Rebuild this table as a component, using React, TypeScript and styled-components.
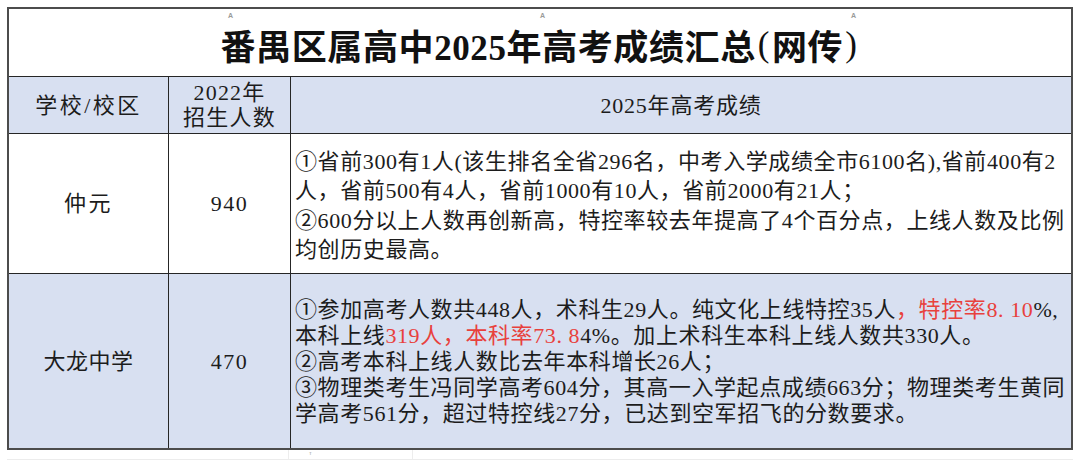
import React from 'react';
import styled, { createGlobalStyle } from 'styled-components';

const FONT = `"Liberation Serif", "Noto Sans CJK SC", serif`;
const LINE = '#262626';
const BLUE = '#d8e0f1';
const RED = '#e8413d';

const GlobalStyle = createGlobalStyle`
    html, body {
        margin: 0;
        padding: 0;
        background: #ffffff;
    }
    body {
        font-family: ${FONT};
        color: #1c1c1c;
    }
`;

const Page = styled.div`
    width: 1080px;
    height: 465px;
    padding: 7px 0 0 7px;
    box-sizing: border-box;
    overflow: hidden;
`;

const Sheet = styled.div`
    width: 1066px;
    display: grid;
    grid-template-columns: 160px 122px 1fr;
    grid-template-rows: 68px 57px 140px 174px;
    border: 2px solid #4c4c4c;
    box-sizing: border-box;
`;

const Cell = styled.div<{ $bg?: string; $last?: boolean; $bottom?: boolean; $spacing?: number }>`
    background: ${p => p.$bg || '#ffffff'};
    border-right: ${p => (p.$last ? 'none' : `1.5px solid ${LINE}`)};
    border-bottom: ${p => (p.$bottom ? 'none' : `1.5px solid ${LINE}`)};
    display: flex;
    align-items: center;
    justify-content: center;
    text-align: center;
    font-size: 22px;
    line-height: 25px;
    letter-spacing: ${p => p.$spacing ?? 1.5}px;
    box-sizing: border-box;
`;

const TitleCell = styled.div`
    grid-column: 1 / 4;
    position: relative;
    border-bottom: 1.5px solid ${LINE};
    display: flex;
    align-items: center;
    justify-content: center;
    padding-top: 4px;
    font-size: 35px;
    font-weight: 700;
    letter-spacing: 0.6px;
    color: #111;
    box-sizing: border-box;
`;

const Marker = styled.span<{ $x: number }>`
    position: absolute;
    top: 3px;
    left: ${p => p.$x}px;
    font-family: "Liberation Sans", sans-serif;
    font-size: 7px;
    color: #9a9a9a;
`;

const Paren = styled.span`
    font-weight: 400;
    margin: 0 2px;
`;

const TextCell = styled(Cell)<{ $lh: number; $top: number }>`
    justify-content: center;
    flex-direction: column;
    align-items: flex-start;
    text-align: left;
    padding: ${p => p.$top}px 0 0 4px;
    line-height: ${p => p.$lh}px;
    letter-spacing: 0.6px;
`;

const Line = styled.div`
    white-space: nowrap;
`;

const Red = styled.span`
    color: ${RED};
`;

const Below = styled.div`
    width: 1066px;
    height: 9px;
    display: grid;
    grid-template-columns: 282px 124px 1fr;
    border-bottom: 1px solid #ececec;
    position: relative;
`;

const BelowCell = styled.div`
    border-right: 1px solid #ededed;
`;

const Tick = styled.span`
    position: absolute;
    left: 302px;
    top: 0;
    font-family: "Liberation Sans", sans-serif;
    font-size: 6px;
    color: #aaa;
`;

export default function App() {
    return (
        <Page>
            <GlobalStyle />
            <Sheet>
                <TitleCell>
                    <Marker $x={219}>A</Marker>
                    <Marker $x={531}>A</Marker>
                    <Marker $x={842}>A</Marker>
                    番禺区属高中2025年高考成绩汇总<Paren>(</Paren>网传<Paren>)</Paren>
                </TitleCell>

                <Cell $bg={BLUE} $spacing={2.5}>学校/校区</Cell>
                <Cell $bg={BLUE} $spacing={1.2}>
                    2022年
                    <br />
                    招生人数
                </Cell>
                <Cell $bg={BLUE} $last $spacing={0.8}>2025年高考成绩</Cell>

                <Cell $spacing={2.5}>仲元</Cell>
                <Cell>940</Cell>
                <TextCell $last $lh={29.4} $top={4}>
                    <Line>①省前300有1人(该生排名全省296名，中考入学成绩全市6100名),省前400有2</Line>
                    <Line>人，省前500有4人，省前1000有10人，省前2000有21人；</Line>
                    <Line>②600分以上人数再创新高，特控率较去年提高了4个百分点，上线人数及比例</Line>
                    <Line>均创历史最高。</Line>
                </TextCell>

                <Cell $bg={BLUE} $bottom $spacing={0.5}>大龙中学</Cell>
                <Cell $bg={BLUE} $bottom>470</Cell>
                <TextCell $bg={BLUE} $last $bottom $lh={26} $top={1}>
                    <Line>
                        ①参加高考人数共448人，术科生29人。纯文化上线特控35人<Red>，特控率8. 10</Red>%,
                    </Line>
                    <Line>
                        本科上线<Red>319人，本科率73. 8</Red>4%。加上术科生本科上线人数共330人。
                    </Line>
                    <Line>②高考本科上线人数比去年本科增长26人；</Line>
                    <Line>③物理类考生冯同学高考604分，其高一入学起点成绩663分；物理类考生黄同</Line>
                    <Line>学高考561分，超过特控线27分，已达到空军招飞的分数要求。</Line>
                </TextCell>
            </Sheet>
            <Below>
                <BelowCell />
                <BelowCell />
                <div />
                <Tick>т</Tick>
            </Below>
        </Page>
    );
}
